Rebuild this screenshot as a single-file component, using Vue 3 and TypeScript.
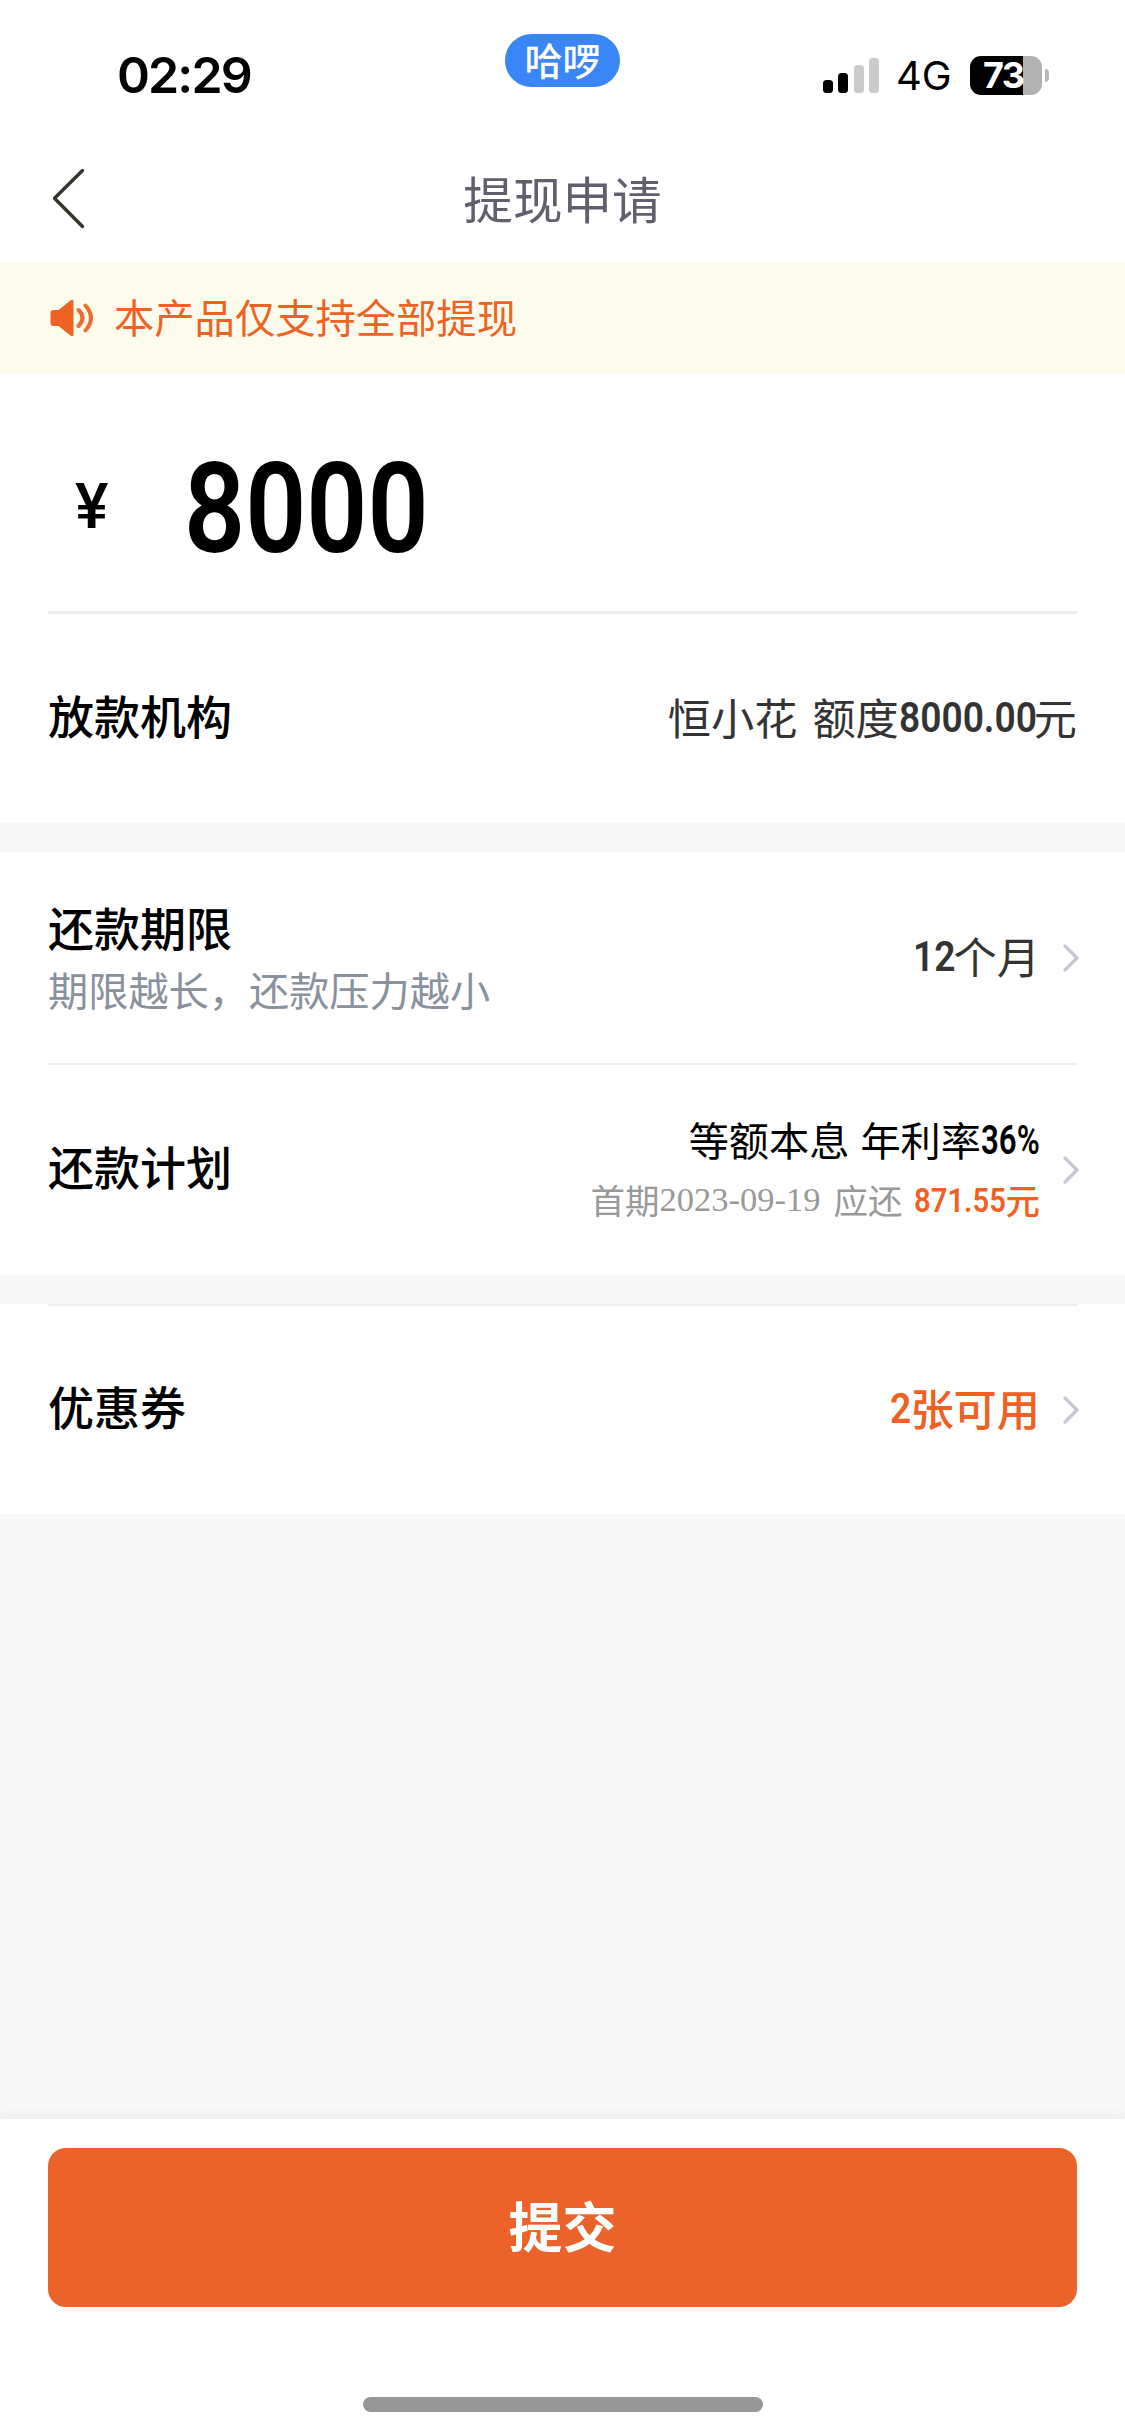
<script setup lang="ts">
import { ref } from 'vue'

interface SignalBar {
  height: number
  active: boolean
}

const signal: SignalBar[] = [
  { height: 13, active: true },
  { height: 20, active: true },
  { height: 28, active: false },
  { height: 35, active: false },
]
const time = ref('02:29')
const battery = ref(73)
const amount = ref('8000')
</script>

<template>
  <div class="page">
    <header class="status">
      <div class="status-side">
        <span class="time">{{ time }}</span>
      </div>
      <span class="pill">哈啰</span>
      <div class="status-side right">
        <div class="signal">
          <i
            v-for="(bar, i) in signal"
            :key="i"
            :class="{ on: bar.active }"
            :style="{ height: bar.height + 'px' }"
          ></i>
        </div>
        <span class="network">4G</span>
        <div class="battery">
          <div class="battery-body"><span>{{ battery }}</span></div>
          <i class="battery-nub"></i>
        </div>
      </div>
    </header>

    <nav class="nav">
      <svg class="back" width="34" height="62" viewBox="0 0 34 62">
        <path d="M31.5 3.5 L3.5 31.3 L31.5 59.5" fill="none" stroke="#38332b" stroke-width="3.4" stroke-linecap="round" stroke-linejoin="round" />
      </svg>
      <h1>提现申请</h1>
    </nav>

    <div class="notice">
      <svg width="44" height="38" viewBox="0 0 44 38">
        <path d="M3.5 11 H8.5 L20.5 1.4 Q23.5 -0.4 23.5 2.5 V35.5 Q23.5 38.4 20.5 36.6 L8.5 27 H3.5 Q.5 27 .5 24 V14 Q.5 11 3.5 11Z" fill="#ee6224" />
        <path d="M28.5 11 Q36.5 19 28.5 27" fill="none" stroke="#ee6c32" stroke-width="4" stroke-linecap="round" />
        <path d="M35.5 6.5 Q46.5 19 35.5 31.5" fill="none" stroke="#ee6c32" stroke-width="4" stroke-linecap="round" />
      </svg>
      <span>本产品仅支持全部提现</span>
    </div>

    <main>
      <section class="card">
        <div class="amount">
          <span class="yen">¥</span>
          <span class="digits">{{ amount }}</span>
        </div>
        <div class="row lender">
          <span class="label">放款机构</span>
          <span class="value">恒小花<i class="gap lg"></i>额度<b class="din d800">8000.00</b>元</span>
        </div>
      </section>

      <section class="card">
        <div class="row term">
          <div class="label-group">
            <span class="label">还款期限</span>
            <span class="hint">期限越长，还款压力越小</span>
          </div>
          <span class="value"><b class="din d12">12</b>个月</span>
          <svg class="chev" width="18" height="30" viewBox="0 0 18 30"><path d="M3 3 L15 15 L3 27" /></svg>
        </div>
        <div class="row plan">
          <span class="label">还款计划</span>
          <div class="plan-value">
            <span class="rate">等额本息<i class="gap"></i>年利率<b class="din d36">36%</b></span>
            <span class="first">首期<span class="date">2023-09-19</span>应还<strong><b class="din d871">871.55</b>元</strong></span>
          </div>
          <svg class="chev" width="18" height="30" viewBox="0 0 18 30"><path d="M3 3 L15 15 L3 27" /></svg>
        </div>
      </section>

      <section class="card">
        <div class="row coupon">
          <span class="label">优惠券</span>
          <span class="value accent"><b class="din d2">2</b>张可用</span>
          <svg class="chev" width="18" height="30" viewBox="0 0 18 30"><path d="M3 3 L15 15 L3 27" /></svg>
        </div>
      </section>
    </main>

    <footer>
      <button type="button">提交</button>
      <div class="home"></div>
    </footer>
  </div>
</template>

<style>
body {
  margin: 0;
  background: #fff;
}
</style>

<style scoped>
* {
  box-sizing: border-box;
}
.page {
  width: 1125px;
  height: 2435px;
  display: flex;
  flex-direction: column;
  background: #f7f7f7;
  font-family: 'Noto Sans CJK SC', sans-serif;
  color: #000;
  overflow: hidden;
}
i {
  font-style: normal;
}
.status {
  height: 134px;
  background: #fff;
  display: flex;
  align-items: flex-start;
  padding: 34px 76px 0 117px;
}
.status-side {
  width: 388px;
  height: 82px;
  display: flex;
  align-items: center;
}
.status-side.right {
  width: 429px;
  padding-left: 203px;
}
.time {
  font: 600 50px/60px Inter, sans-serif;
  letter-spacing: -1.9px;
}
.pill {
  flex: none;
  width: 115px;
  height: 53px;
  border-radius: 27px;
  background: #3b86f7;
  color: #fff;
  font-size: 38px;
  font-weight: 500;
  line-height: 49px;
  text-align: center;
}
.signal {
  flex: none;
  width: 56px;
  height: 35px;
  display: flex;
  align-items: flex-end;
  gap: 5.4px;
}
.signal i {
  width: 10px;
  border-radius: 3.5px;
  background: #cbcbcb;
}
.signal i.on {
  background: #000;
}
.network {
  font: 400 40px/50px Inter, sans-serif;
  width: 72px;
  padding: 1px 0 0 17px;
}
.battery {
  flex: none;
  display: flex;
  align-items: center;
  gap: 3px;
  margin-left: 19px;
}
.battery-body {
  width: 72px;
  height: 39px;
  border-radius: 11px;
  background: linear-gradient(90deg, #000 53px, #b2b2b2 53px);
  color: #fff;
  font: 700 36px/39px Inter, sans-serif;
  letter-spacing: -1.5px;
  padding-left: 13px;
}
.battery-nub {
  width: 4px;
  height: 13px;
  border-radius: 0 5px 5px 0;
  background: #b8b8b8;
}
.nav {
  height: 128.5px;
  background: #fff;
  display: flex;
  align-items: center;
  padding: 0 51px;
}
.nav h1 {
  flex: 1;
  margin: 0 34px 2px 0;
  text-align: center;
  font-size: 49.6px;
  line-height: 70px;
  font-weight: 400;
  color: #625e6e;
}
.notice {
  height: 110.5px;
  background: #fdfbeb;
  color: #ee6224;
  display: flex;
  align-items: center;
  padding-left: 50px;
  gap: 20px;
  font-size: 40.3px;
}
.notice span {
  padding-bottom: 5px;
}
.card {
  background: #fff;
  padding: 0 48px;
}
.card + .card {
  margin-top: 29px;
}
.amount {
  height: 241px;
  padding-top: 34px;
  border-bottom: 3px solid #eee;
  display: flex;
  align-items: center;
  font-family: Roboto, sans-serif;
}
.yen {
  width: 136px;
  padding-left: 27px;
  padding-bottom: 6px;
  font-size: 63px;
  font-weight: 500;
}
.digits {
  font-size: 126px;
  font-weight: 600;
  line-height: 1;
  transform: scaleX(0.85);
  transform-origin: left center;
}
.row {
  display: flex;
  align-items: center;
}
.label {
  flex: 1;
  font-size: 46px;
  line-height: 66px;
  font-weight: 500;
  padding-bottom: 10px;
}
.lender {
  height: 209px;
}
.value {
  display: flex;
  align-items: center;
  font-size: 43.2px;
  line-height: 60px;
  color: #333;
  padding-bottom: 6px;
}
.gap {
  width: 11px;
}
.gap.lg {
  width: 15px;
}
.din {
  flex: none;
  font-family: Roboto, sans-serif;
  font-weight: 600;
  white-space: nowrap;
  padding-top: 4px;
  transform: scaleX(0.86);
  transform-origin: left center;
}
.d800 {
  width: 135px;
}
.d12 {
  width: 41px;
}
.d36 {
  width: 59px;
  font-size: 40px;
  transform: scaleX(0.78);
}
.d871 {
  width: 92px;
  font-size: 34px;
}
.d2 {
  width: 20px;
}
.term {
  height: 213px;
  border-bottom: 2px solid #f0f0f0;
}
.label-group {
  flex: 1;
  display: flex;
  flex-direction: column;
  padding-bottom: 3px;
}
.label-group .label {
  padding-bottom: 0;
  line-height: 65px;
}
.hint {
  font-size: 40.2px;
  line-height: 60px;
  color: #88919c;
}
.chev {
  flex: none;
  margin: 0 -3px 0 22px;
}
.chev path {
  fill: none;
  stroke: #c5cad4;
  stroke-width: 3.4;
  stroke-linecap: round;
  stroke-linejoin: round;
}
.plan {
  height: 210px;
}
.plan-value {
  display: flex;
  flex-direction: column;
  align-items: flex-end;
  padding-bottom: 4px;
}
.rate,
.first,
strong {
  display: flex;
  align-items: center;
}
.rate {
  font-size: 40.2px;
  line-height: 58px;
}
.first {
  font-size: 34.5px;
  line-height: 56px;
  color: #999;
}
.date {
  font-family: 'Liberation Serif', serif;
  width: 174px;
}
strong {
  margin-left: 11px;
  font-weight: 500;
  color: #f06022;
}
.first .din {
  padding-top: 2px;
}
.coupon {
  height: 210px;
  border-top: 2px solid #eee;
}
.accent {
  font-weight: 500;
  color: #f06022;
}
footer {
  margin-top: auto;
  height: 316px;
  background: #fff;
  box-shadow: 0 -2px 14px rgba(0, 0, 0, 0.06);
  padding: 29px 48px 0;
  display: flex;
  flex-direction: column;
  align-items: center;
}
button {
  width: 1029px;
  height: 159px;
  border: 0;
  border-radius: 18px;
  background: #eb632a;
  color: #fff;
  font: 700 54px/80px 'Noto Sans CJK SC', sans-serif;
  padding: 0 0 6px;
}
.home {
  width: 400px;
  height: 15px;
  border-radius: 8px;
  background: #979797;
  margin-top: 90px;
}
</style>
